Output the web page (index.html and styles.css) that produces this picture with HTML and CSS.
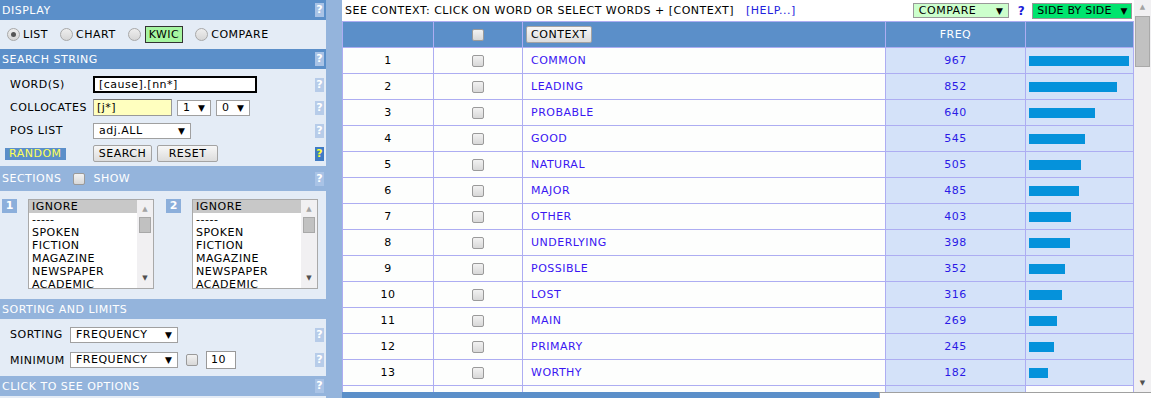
FILE: index.html
```
<!DOCTYPE html>
<html lang="en">
<head>
    <meta charset="UTF-8">
    <title>Corpus search</title>
    <link rel="stylesheet" href="styles.css">
</head>
<body>
    <div class="page">
        <div class="side">
            <div class="hdr dark"><span>DISPLAY</span><span class="help">?</span></div>
            <div class="radios">
                <label class="opt"><span class="radio on"></span>LIST</label>
                <label class="opt"><span class="radio"></span>CHART</label>
                <label class="opt"><span class="radio"></span><span class="kwic">KWIC</span></label>
                <label class="opt"><span class="radio"></span>COMPARE</label>
            </div>

            <div class="hdr dark"><span>SEARCH STRING</span><span class="help">?</span></div>
            <div class="form">
                <div class="row">
                    <span class="lbl">WORD(S)</span>
                    <span class="ctrl"><span class="word-input">[cause].[nn*]</span></span>
                    <span class="help">?</span>
                </div>
                <div class="row">
                    <span class="lbl">COLLOCATES</span>
                    <span class="ctrl">
                        <span class="coll-input">[j*]</span>
                        <span class="sel w33">1<i>▼</i></span>
                        <span class="sel w33">0<i>▼</i></span>
                    </span>
                    <span class="help">?</span>
                </div>
                <div class="row">
                    <span class="lbl">POS LIST</span>
                    <span class="ctrl"><span class="sel w97">adj.ALL<i>▼</i></span></span>
                    <span class="help">?</span>
                </div>
                <div class="row">
                    <span class="lbl"><span class="random">RANDOM</span></span>
                    <span class="ctrl">
                        <span class="btn w59">SEARCH</span>
                        <span class="btn w61">RESET</span>
                    </span>
                    <span class="help hot">?</span>
                </div>
            </div>

            <div class="hdr light tall">
                <span class="sec-title">SECTIONS <span class="chk"></span> SHOW</span>
                <span class="help">?</span>
            </div>
            <div class="sections">
                <span class="badge">1</span>
                <div class="listbox">
                    <ul>
                        <li class="sel-item">IGNORE</li>
                        <li>-----</li>
                        <li>SPOKEN</li>
                        <li>FICTION</li>
                        <li>MAGAZINE</li>
                        <li>NEWSPAPER</li>
                        <li>ACADEMIC</li>
                    </ul>
                    <div class="lb-scroll"><i class="up">▲</i><b></b><i class="dn">▼</i></div>
                </div>
                <span class="badge b2">2</span>
                <div class="listbox">
                    <ul>
                        <li class="sel-item">IGNORE</li>
                        <li>-----</li>
                        <li>SPOKEN</li>
                        <li>FICTION</li>
                        <li>MAGAZINE</li>
                        <li>NEWSPAPER</li>
                        <li>ACADEMIC</li>
                    </ul>
                    <div class="lb-scroll"><i class="up">▲</i><b></b><i class="dn">▼</i></div>
                </div>
            </div>

            <div class="hdr light"><span>SORTING AND LIMITS</span></div>
            <div class="limits">
                <div class="row r15">
                    <span class="lbl">SORTING</span>
                    <span class="ctrl"><span class="sel w107">FREQUENCY<i>▼</i></span></span>
                    <span class="help">?</span>
                </div>
                <div class="row r18">
                    <span class="lbl">MINIMUM</span>
                    <span class="ctrl">
                        <span class="sel w107">FREQUENCY<i>▼</i></span>
                        <span class="chk"></span>
                        <span class="num-input">10</span>
                    </span>
                    <span class="help">?</span>
                </div>
            </div>

            <div class="hdr light"><span>CLICK TO SEE OPTIONS</span><span class="help">?</span></div>
        </div>

        <div class="divider"></div>

        <div class="main">
            <div class="main-top">
                <div class="content">
                    <div class="topbar">
                        <span class="hint">SEE CONTEXT: CLICK ON WORD OR SELECT WORDS + [CONTEXT]</span>
                        <a class="help-link" href="#">[HELP...]</a>
                        <span class="sel compare">COMPARE<i>▼</i></span>
                        <span class="q">?</span>
                        <span class="sel side-by-side">SIDE BY SIDE<i>▼</i></span>
                    </div>
                    <div class="table-wrap">
                        <table class="kw">
                            <colgroup>
                                <col style="width: 91px">
                                <col style="width: 89px">
                                <col style="width: 363px">
                                <col style="width: 140px">
                                <col>
                            </colgroup>
                            <thead>
                                <tr>
                                    <th></th>
                                    <th><span class="chk"></span></th>
                                    <th class="left"><span class="btn ctx">CONTEXT</span></th>
                                    <th>FREQ</th>
                                    <th></th>
                                </tr>
                            </thead>
                            <tbody>
                                <tr><td>1</td><td><span class="chk"></span></td><td class="word"><a href="#">COMMON</a></td><td class="freq">967</td><td class="bar-cell"><span class="bar" style="width: 100px"></span></td></tr>
                                <tr><td>2</td><td><span class="chk"></span></td><td class="word"><a href="#">LEADING</a></td><td class="freq">852</td><td class="bar-cell"><span class="bar" style="width: 88px"></span></td></tr>
                                <tr><td>3</td><td><span class="chk"></span></td><td class="word"><a href="#">PROBABLE</a></td><td class="freq">640</td><td class="bar-cell"><span class="bar" style="width: 66px"></span></td></tr>
                                <tr><td>4</td><td><span class="chk"></span></td><td class="word"><a href="#">GOOD</a></td><td class="freq">545</td><td class="bar-cell"><span class="bar" style="width: 56px"></span></td></tr>
                                <tr><td>5</td><td><span class="chk"></span></td><td class="word"><a href="#">NATURAL</a></td><td class="freq">505</td><td class="bar-cell"><span class="bar" style="width: 52px"></span></td></tr>
                                <tr><td>6</td><td><span class="chk"></span></td><td class="word"><a href="#">MAJOR</a></td><td class="freq">485</td><td class="bar-cell"><span class="bar" style="width: 50px"></span></td></tr>
                                <tr><td>7</td><td><span class="chk"></span></td><td class="word"><a href="#">OTHER</a></td><td class="freq">403</td><td class="bar-cell"><span class="bar" style="width: 42px"></span></td></tr>
                                <tr><td>8</td><td><span class="chk"></span></td><td class="word"><a href="#">UNDERLYING</a></td><td class="freq">398</td><td class="bar-cell"><span class="bar" style="width: 41px"></span></td></tr>
                                <tr><td>9</td><td><span class="chk"></span></td><td class="word"><a href="#">POSSIBLE</a></td><td class="freq">352</td><td class="bar-cell"><span class="bar" style="width: 36px"></span></td></tr>
                                <tr><td>10</td><td><span class="chk"></span></td><td class="word"><a href="#">LOST</a></td><td class="freq">316</td><td class="bar-cell"><span class="bar" style="width: 33px"></span></td></tr>
                                <tr><td>11</td><td><span class="chk"></span></td><td class="word"><a href="#">MAIN</a></td><td class="freq">269</td><td class="bar-cell"><span class="bar" style="width: 28px"></span></td></tr>
                                <tr><td>12</td><td><span class="chk"></span></td><td class="word"><a href="#">PRIMARY</a></td><td class="freq">245</td><td class="bar-cell"><span class="bar" style="width: 25px"></span></td></tr>
                                <tr><td>13</td><td><span class="chk"></span></td><td class="word"><a href="#">WORTHY</a></td><td class="freq">182</td><td class="bar-cell"><span class="bar" style="width: 19px"></span></td></tr>
                                <tr><td></td><td></td><td></td><td class="freq"></td><td></td></tr>
                            </tbody>
                        </table>
                    </div>
                </div>
                <div class="scrollbar">
                    <i class="up">▲</i>
                    <b class="thumb"></b>
                    <i class="dn">▼</i>
                </div>
            </div>
            <div class="main-bottom">
                <div class="strip"></div>
                <div class="info">Help / information for context<i>▼</i></div>
            </div>
        </div>
    </div>
</body>
</html>
```

FILE: styles.css
```
body {
    margin: 0;
    font-family: "DejaVu Sans", Verdana, sans-serif;
    font-size: 11px;
    letter-spacing: 0.5px;
    color: #000;
    background: #fff;
}
.page {
    display: flex;
    height: 398px;
    overflow: hidden;
}

/* left panel */
.side {
    width: 326px;
    flex: none;
    background: #e4ecf6;
}
.hdr {
    display: flex;
    align-items: center;
    justify-content: space-between;
    height: 20px;
    padding-left: 2px;
    color: #fff;
}
.hdr.dark { background: #5b8fc9; }
.hdr.light { background: #94b4dc; }
.hdr.tall { height: 25px; }
.help {
    width: 9px;
    height: 14px;
    margin-right: 2px;
    background: #b7cce9;
    color: #fff;
    font-weight: bold;
    font-size: 11px;
    line-height: 14px;
    text-align: center;
    letter-spacing: 0;
}
.hdr .help { background: #a9c3e6; }
.help.hot {
    background: #3f7bc4;
    color: #ffff33;
}

.radios {
    display: flex;
    align-items: center;
    height: 29px;
    padding-left: 7px;
}
.opt {
    display: flex;
    align-items: center;
    margin-right: 12px;
}
.radio {
    width: 11px;
    height: 11px;
    border: 1px solid #a8a8a8;
    border-radius: 50%;
    background: linear-gradient(#eeeeee, #d6d6d6);
    margin-right: 3px;
    position: relative;
}
.radio.on::after {
    content: "";
    position: absolute;
    left: 3px;
    top: 3px;
    width: 5px;
    height: 5px;
    border-radius: 50%;
    background: #555;
}
.kwic {
    border: 1px solid #333;
    background: #a6f5a0;
    padding: 1px 3px;
    margin-left: 1px;
}

.form {
    display: flex;
    flex-direction: column;
    gap: 6px;
    padding: 7px 0 4px;
}
.row {
    display: flex;
    align-items: center;
    height: 17px;
}
.row.r15 { height: 15px; }
.row.r18 { height: 18px; }
.lbl {
    width: 83px;
    padding-left: 10px;
    flex: none;
}
.ctrl {
    flex: 1;
    display: flex;
    align-items: center;
    gap: 5px;
}
.word-input {
    width: 154px;
    height: 13px;
    border: 2px solid #000;
    background: #fff;
    padding: 0 2px 0 4px;
    line-height: 13px;
}
.coll-input {
    width: 74px;
    height: 15px;
    border: 1px solid #999;
    border-top-color: #777;
    background: #ffffbf;
    padding-left: 3px;
    line-height: 15px;
}
.sel {
    display: inline-flex;
    align-items: center;
    justify-content: space-between;
    height: 14px;
    border: 1px solid #a0a0a0;
    background: #fff;
    padding: 0 5px;
    box-sizing: content-box;
    line-height: 14px;
    white-space: nowrap;
}
.sel i {
    font-style: normal;
    font-size: 9px;
    letter-spacing: 0;
}
.w33 { width: 22px; }
.w97 { width: 86px; }
.w107 { width: 96px; }
.random {
    margin-left: -5px;
    padding: 0 4px;
    background: #5b8fc9;
    color: #ffff55;
    display: inline-block;
    height: 12px;
    line-height: 12px;
}
.btn {
    display: inline-flex;
    align-items: center;
    justify-content: center;
    height: 15px;
    border: 1px solid #a3a3a3;
    border-radius: 2px;
    background: linear-gradient(#f7f7f7, #dcdcdc);
}
.w59 { width: 57px; }
.w61 { width: 59px; }

.sec-title {
    display: flex;
    align-items: center;
}
.sec-title .chk { margin: 0 8px 0 12px; }
.chk {
    display: inline-block;
    width: 10px;
    height: 10px;
    border: 1px solid #9a9a9a;
    border-radius: 2px;
    background: linear-gradient(#f2f2f2, #d8d8d8);
}

.sections {
    display: flex;
    align-items: flex-start;
    height: 90px;
    padding: 8px 0 10px 2px;
}
.badge {
    width: 15px;
    height: 14px;
    background: #8cafdb;
    color: #fff;
    text-align: center;
    line-height: 14px;
    font-weight: bold;
    letter-spacing: 0;
    margin-right: 11px;
}
.badge.b2 { margin-left: 12px; }
.listbox {
    display: flex;
    width: 124px;
    height: 88px;
    border: 1px solid #a9a9a9;
    background: #fff;
    overflow: hidden;
}
.listbox ul {
    flex: 1;
    list-style: none;
    margin: 0;
    padding: 0;
    line-height: 13px;
}
.listbox li { padding-left: 3px; }
.listbox li.sel-item { background: #c8c8c8; }
.lb-scroll {
    width: 16px;
    background: #f1f0f2;
    position: relative;
}
.lb-scroll i, .scrollbar i {
    position: absolute;
    left: 0;
    right: 0;
    text-align: center;
    font-style: normal;
    font-size: 7px;
    letter-spacing: 0;
    color: #a3a3a3;
}
.lb-scroll .up { top: 5px; }
.lb-scroll .dn { bottom: 6px; color: #505050; }
.lb-scroll b {
    position: absolute;
    left: 2px;
    top: 17px;
    width: 12px;
    height: 16px;
    background: #c1c1c1;
    border: 1px solid #a8a8a8;
    box-sizing: border-box;
}

.limits {
    display: flex;
    flex-direction: column;
    gap: 9px;
    padding: 8px 0 7px;
}
.limits .lbl { width: 60px; }
.limits .ctrl { gap: 8px; }
.num-input {
    width: 24px;
    height: 16px;
    border: 1px solid #999;
    background: #fff;
    padding-left: 4px;
    line-height: 16px;
}

.divider {
    width: 16px;
    flex: none;
    background: #94b4dc;
}

/* main area */
.main {
    flex: 1;
    display: flex;
    flex-direction: column;
}
.main-top {
    display: flex;
    height: 392px;
}
.content {
    flex: 1;
    min-width: 0;
}
.topbar {
    display: flex;
    align-items: center;
    height: 21px;
    padding-left: 3px;
}
.hint {
    width: 401px;
    white-space: nowrap;
}
.help-link {
    color: #2222dd;
    text-decoration: none;
}
.sel.compare {
    margin-left: 117px;
    width: 84px;
    height: 13px;
    background: #ccffcc;
    border-color: #999;
}
.q {
    color: #1a1ad8;
    font-weight: bold;
    font-size: 12px;
    margin: 0 7px 0 9px;
}
.sel.side-by-side {
    width: 90px;
    height: 14px;
    padding: 0 4px;
    letter-spacing: 0.2px;
    background: #00e46e;
    border-color: #999;
}

.table-wrap {
    height: 371px;
    overflow: hidden;
}
.kw {
    table-layout: fixed;
    width: 792px;
    border-collapse: collapse;
}
.kw th, .kw td {
    border: 1px solid #adadf2;
    height: 25px;
    padding: 0;
    text-align: center;
}
.kw th {
    background: #5b8fc9;
    color: #fff;
    font-weight: normal;
}
.kw th.left { text-align: left; padding-left: 3px; }
.kw td { background: #fdfefd; }
.kw .chk { vertical-align: middle; }
.btn.ctx {
    width: 64px;
    color: #000;
}
.kw td.word { text-align: left; padding-left: 8px; }
.word a {
    color: #3a16f2;
    text-decoration: none;
}
.kw td.freq {
    background: #d4e2f9;
    color: #2b1ae6;
}
.kw td.bar-cell {
    background: #d4e2f9;
    text-align: left;
    padding-left: 3px;
}
.bar {
    display: block;
    height: 10px;
    background: #0592db;
}

.scrollbar {
    width: 17px;
    flex: none;
    background: #f1f0f2;
    position: relative;
}
.scrollbar .up { top: 3px; }
.scrollbar .dn { bottom: 5px; color: #505050; }
.scrollbar .thumb {
    position: absolute;
    left: 1px;
    top: 16px;
    width: 15px;
    height: 51px;
    background: #c1c1c1;
    border: 1px solid #a9a9a9;
    box-sizing: border-box;
}

.main-bottom {
    display: flex;
    height: 6px;
}
.strip {
    width: 537px;
    background: #5b8fc9;
}
.info {
    flex: 1;
    position: relative;
    border-top: 1px solid #a0a0a0;
    border-left: 1px solid #a0a0a0;
    background: #fff;
    padding: 3px 0 0 10px;
    overflow: hidden;
    line-height: 13px;
}
.info i {
    position: absolute;
    right: 5px;
    top: 2px;
    font-style: normal;
    font-size: 9px;
}
```
